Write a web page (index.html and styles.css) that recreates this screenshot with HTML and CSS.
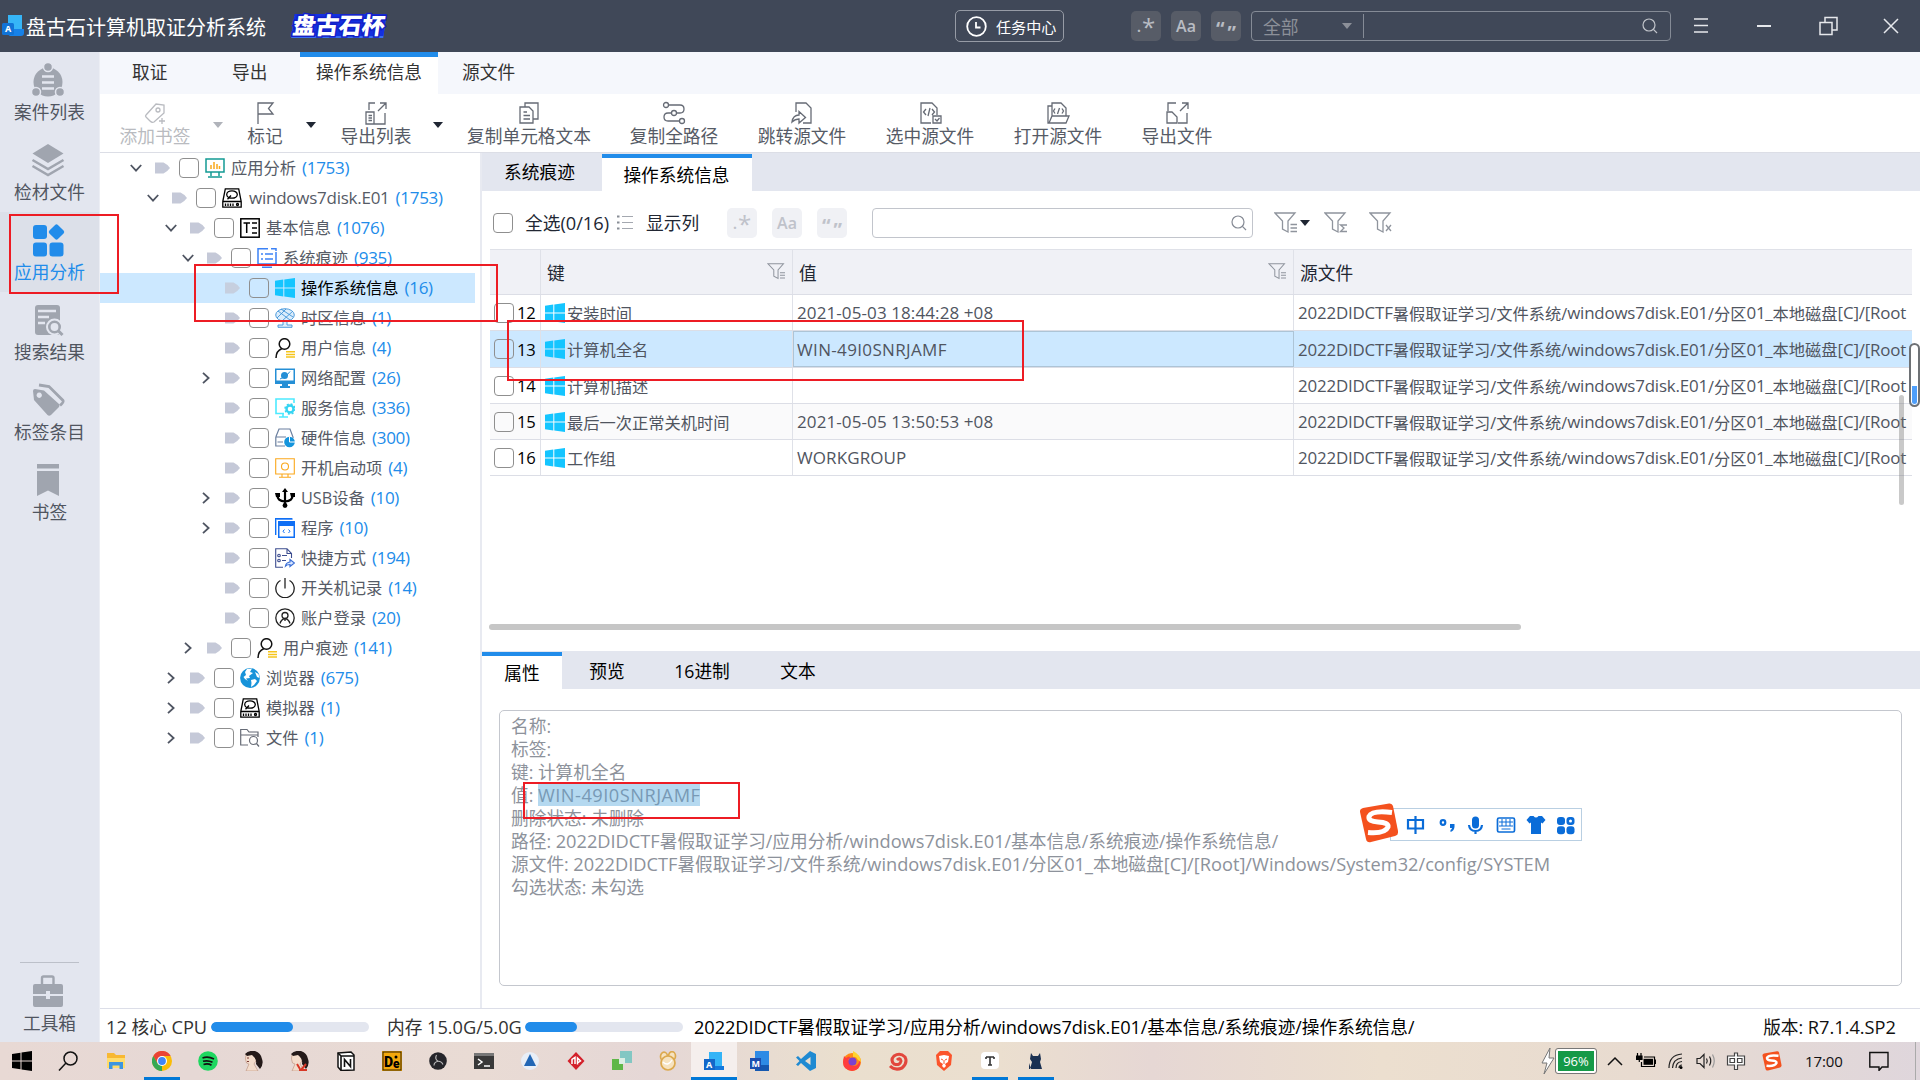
FILE: index.html
```html
<!DOCTYPE html>
<html lang="zh-CN">
<head>
<meta charset="utf-8">
<title>盘古石计算机取证分析系统</title>
<link rel="stylesheet" href="styles.css">
</head>
<body>
<svg class="sprite" width="0" height="0">
  <symbol id="win" viewBox="0 0 20 20"><path fill="#14c5ff" d="M0 2.8 8.3 1.6V9.5H0zM9.3 1.4 20 0V9.5H9.3zM0 10.5H8.3V18.4L0 17.2zM9.3 10.5H20V20L9.3 18.5z"/></symbol>
  <symbol id="tag" viewBox="0 0 15 12"><path fill="#c5c9d8" d="M0 .5H8.500Q12 2 15 6 12 10 8.500 11.500H0z"/></symbol>
  <symbol id="down" viewBox="0 0 12 12"><path d="M.8 3 6 8.600 11.200 3" fill="none" stroke="#4f5562" stroke-width="1.800"/></symbol>
  <symbol id="right" viewBox="0 0 12 12"><path d="M3 .8 8.600 6 3 11.200" fill="none" stroke="#4f5562" stroke-width="1.800"/></symbol>
  <symbol id="search" viewBox="0 0 16 16"><g fill="none" stroke="currentColor" stroke-width="1.200"><circle cx="7" cy="7" r="6"/><path d="M11.400 11.400 15 15"/></g></symbol>
  <symbol id="filter" viewBox="0 0 24 22"><g fill="none" stroke="#8f949d" stroke-width="1.300"><path d="M1 1H21L14 9V20L8.500 17V9z"/><path d="M16.500 12.500H23M16.500 16H23M16.500 19.500H23"/></g></symbol>
  <symbol id="disk" viewBox="0 0 20 20"><g fill="none" stroke="#000" stroke-width="1.300"><path d="M.8 13.500 3.300 .8H16.700L19.200 13.500V19.200H.8z"/><ellipse cx="10" cy="6.500" rx="5.300" ry="3.700"/><path d="M1 13.500H19M9 7.500 5.500 11.300"/><path d="M3.500 15.500V18M6 15.500V18M8.500 15.500V18M11 15.500V18"/><circle cx="15.500" cy="16.500" r="1"/></g></symbol>
  <symbol id="person" viewBox="0 0 20 20"><g fill="none" stroke="#111" stroke-width="1.500"><circle cx="9.500" cy="6" r="5.300"/><path d="M1 20Q1 13 7 10.500"/></g><path d="M11 13.700H20M11 16.400H20M11 19.100H20" stroke="#f5c51c" stroke-width="1.500"/></symbol>
  <symbol id="sogou" viewBox="0 0 40 40"><path fill="#f4511e" d="M4 5 30 .5Q33 0 34 3L39 28Q39.500 32 36 33L12 39Q8 40 7 36L1 9Q.5 6 4 5z"/><path d="M33 9.500Q13 7 10 13.500 9 18.500 19 19 30 19.500 29 24 26 31 9 29.500" fill="none" stroke="#fff" stroke-width="5"/></symbol>
</svg>

<div class="screen">
  <header class="titlebar">
    <svg class="app-icon" viewBox="0 0 22 22"><path fill="#36b5f7" d="M6 0H20V16H6z"/><path fill="#1681e8" d="M6 14H22V18Q22 21 19 21H8Q5 20 6 14z"/><rect y="8" width="12" height="12" rx="1.500" fill="#1173d6"/><text x="3" y="17" font-size="9" fill="#fff" font-family="Noto Sans" font-weight="700">A</text></svg>
    <h1>盘古石计算机取证分析系统</h1>
    <span class="cup">盘古石杯</span>
    <button class="task-center"><svg width="21" height="21" viewBox="0 0 21 21"><g fill="none" stroke="#fff" stroke-width="1.800"><circle cx="10.500" cy="10.500" r="9.300"/><path d="M10 6V11.500H14.500"/></g></svg>任务中心</button>
    <div class="top-opts"><span class="opt regex">.<b>*</b></span><span class="opt">Aa</span><span class="opt q">“<i>”</i></span></div>
    <div class="top-search"><span class="all">全部</span><i class="tri"></i><span class="field"></span><svg width="16" height="16"><use href="#search"/></svg></div>
    <svg class="win-btns" viewBox="0 0 220 24"><g fill="none" stroke="#e6e8ec" stroke-width="1.500"><path d="M2 5H16M2 11.500H16M2 18H16"/><path d="M65 12H79" stroke-width="2"/><path d="M128 8.500H140V20.500H128zM133 8V3.500H145V16H140.500"/><path d="M192 5 206 19M206 5 192 19"/></g></svg>
  </header>

  <div class="body">
    <nav class="side">
      <a class="side-item"><svg viewBox="0 0 34 34"><g fill="#a0a5af"><circle cx="17" cy="19" r="14.500"/><circle cx="17" cy="4" r="4.500" stroke="#e3e6ef" stroke-width="1.500"/><circle cx="5" cy="29" r="4.500" stroke="#e3e6ef" stroke-width="1.500"/><circle cx="29" cy="29" r="4.500" stroke="#e3e6ef" stroke-width="1.500"/></g><path d="M11 13.500H23M11 19.500H23M11 25.500H23" stroke="#e3e6ef" stroke-width="2.600"/></svg><span>案件列表</span></a>
      <a class="side-item"><svg viewBox="0 0 34 34"><path fill="#a0a5af" d="M17 1 32.500 10.500 17 20 1.500 10.500z"/><path d="M1.500 17 17 26 32.500 17M1.500 23 17 32 32.500 23" fill="none" stroke="#a0a5af" stroke-width="2.500"/></svg><span>检材文件</span></a>
      <a class="side-item on"><svg viewBox="0 0 34 34"><g fill="#218cea"><rect x="2" y="2" width="14" height="14" rx="3"/><rect x="2" y="19.500" width="14" height="14" rx="3"/><rect x="18.500" y="19.500" width="14" height="14" rx="3"/><rect x="19.500" y="3" width="12" height="12" rx="2" transform="rotate(45 25.500 9)"/></g></svg><span>应用分析</span></a>
      <a class="side-item"><svg viewBox="0 0 34 34"><rect x="4" y="2" width="25" height="30" rx="3" fill="#a0a5af"/><path d="M7 8H25M7 14H18M7 20H14" stroke="#e3e6ef" stroke-width="2.400"/><circle cx="23.500" cy="24" r="8.500" fill="#e3e6ef"/><circle cx="23.500" cy="24" r="5.200" fill="none" stroke="#a0a5af" stroke-width="2.600"/><path d="M27 27.500 31.500 32" stroke="#a0a5af" stroke-width="3"/></svg><span>搜索结果</span></a>
      <a class="side-item"><svg viewBox="0 0 34 34"><path fill="#a0a5af" fill-rule="evenodd" d="M2 8Q2 6 4 6L13 7.500 28 21Q29 23 28 24L20 32Q18 33.500 16.500 32L3 17zM8.200 9.500a2.700 2.700 0 1 0 .1 0z"/><path d="M8 2 18 3.500 32 17.500Q33 19 29 22.500" fill="none" stroke="#a0a5af" stroke-width="2.800"/></svg><span>标签条目</span></a>
      <a class="side-item"><svg viewBox="0 0 34 34"><path fill="#a0a5af" d="M6 1H28V5.500H6zM6 8H28V33L17 27.500 6 33z"/></svg><span>书签</span></a>
      <a class="side-item toolbox"><svg viewBox="0 0 34 34"><path d="M11 11V4Q11 2.500 12.500 2.500H21Q22.500 2.500 22.500 4V11" fill="none" stroke="#a0a5af" stroke-width="2.400"/><path fill="#a0a5af" d="M4 10H30Q32 10 32 12V20H19V17H15V20H2V12Q2 10 4 10zM2 22H15V25H19V22H32V31Q32 33 30 33H4Q2 33 2 31z"/></svg><span>工具箱</span></a>
    </nav>

    <div class="main">
      <div class="menu"><span class="m m1">取证</span><span class="m m2">导出</span><span class="m m3 on">操作系统信息</span><span class="m m4">源文件</span></div>
      <div class="tools">
        <div class="tool dim"><svg viewBox="0 0 24 24"><path d="M3 14 13 3 21 4V12L11 21Q9 22 7 20L3 16Q2 15 3 14z"/><circle cx="15" cy="9" r="2"/><path d="M19 17V23M16 20H22"/></svg>添加书签</div><i class="tri dimtri"></i>
        <div class="tool"><svg viewBox="0 0 24 24"><path d="M5 23V2H20L15.500 7.500 20 13H5"/></svg>标记</div><i class="tri"></i>
        <div class="tool shift"><svg viewBox="0 0 24 24"><path d="M5 9V2H11M2 11H10V23H2zM14 10 22 2M16 2H22V8M4.500 14.500H8M4.500 17H8M4.500 19.500H8M10 23H21V12"/></svg>导出列表</div><i class="tri"></i>
        <div class="tool"><svg viewBox="0 0 24 24"><path d="M8 6V2H21V18H16M3 6H12L16 10V22H3zM6.500 11H10M6.500 14.500H13M6.500 18H13"/></svg>复制单元格文本</div>
        <div class="tool"><svg viewBox="0 0 24 24"><circle cx="4" cy="4" r="2.500"/><circle cx="12" cy="12" r="2.500"/><circle cx="20" cy="20" r="2.500"/><path d="M6.500 4H18Q22 4 22 8T18 12H14.500M9.500 12H6Q2 12 2 16T6 20H17.500"/></svg>复制全路径</div>
        <div class="tool"><svg viewBox="0 0 24 24"><path d="M6 11V2H16L21 7V22H13M2 21Q3 14 9 14V10.500L15.500 16.500 9 22V18Q5 18 2 21z"/></svg>跳转源文件</div>
        <div class="tool"><svg viewBox="0 0 24 24"><path d="M13 22H3V2H14L19 7V14M8 8 5.500 11 8 14M14 8 16.500 11 14 14M12 7 10 15M15 15H23V22H15zM17 18 19 20 21.500 17"/></svg>选中源文件</div>
        <div class="tool"><svg viewBox="0 0 24 24"><path d="M6 15V2H15L20 7V15M6 5H2V22H20L23 15H6L3 22M9 7.500 7.500 10 9 12.500M16 7.500 17.500 10 16 12.500M13.500 7 11.500 13"/></svg>打开源文件</div>
        <div class="tool"><svg viewBox="0 0 24 24"><path d="M3 10V2H11M15 10 23 2M17 2H23V8M22 12V22H13M2 22V11H7L12 16V22z"/></svg>导出文件</div>
      </div>

      <div class="work">
        <div class="tree">
          <div class="row l0"><svg class="ar"><use href="#down"/></svg><svg class="tg"><use href="#tag"/></svg><i class="cb"></i><svg class="ic" viewBox="0 0 20 20"><path d="M1 1H19V14H1zM6 14V18M14 14V18M3 19H17" fill="none" stroke="#139a94" stroke-width="1.500"/><path d="M6 11V7M9 11V4M12 11V6M14.500 11V8" stroke="#f9a91e" stroke-width="1.500"/></svg><span>应用分析</span><em>(1753)</em></div>
          <div class="row l1"><svg class="ar"><use href="#down"/></svg><svg class="tg"><use href="#tag"/></svg><i class="cb"></i><svg class="ic"><use href="#disk"/></svg><span class="lat">windows7disk.E01</span><em>(1753)</em></div>
          <div class="row l2"><svg class="ar"><use href="#down"/></svg><svg class="tg"><use href="#tag"/></svg><i class="cb"></i><svg class="ic" viewBox="0 0 20 20"><g fill="none" stroke="#000" stroke-width="1.500"><rect x=".8" y=".8" width="18.400" height="18.400"/><path d="M3.500 5H10M6.700 5V15M12 5H17M12 10H17M12 15H17"/></g></svg><span>基本信息</span><em>(1076)</em></div>
          <div class="row l3"><svg class="ar"><use href="#down"/></svg><svg class="tg"><use href="#tag"/></svg><i class="cb"></i><svg class="ic" viewBox="0 0 20 20"><path d="M11 .8H1V16H19V4M14 .8H19V3M5 19.200H15" fill="none" stroke="#3c82f6" stroke-width="1.500"/><path d="M4 6H6M8 6H16M4 11H6M8 11H16" stroke="#3c82f6" stroke-width="1.300"/></svg><span>系统痕迹</span><em>(935)</em></div>
          <div class="row l4 sel"><svg class="ar"></svg><svg class="tg"><use href="#tag"/></svg><i class="cb"></i><svg class="ic"><use href="#win"/></svg><span>操作系统信息</span><em>(16)</em></div>
          <div class="row l4"><svg class="ar"></svg><svg class="tg"><use href="#tag"/></svg><i class="cb"></i><svg class="ic" viewBox="0 0 20 20"><g fill="#dcedfb" stroke="#3f93d8" stroke-width=".9"><ellipse cx="10" cy="7" rx="9.300" ry="6.300"/><path fill="none" d="M3 3 15 12M6 1 18 9M2 10 11 1M7 13 18 3"/><path d="M8 13.500H12V17H17V19.300H3V17H8z"/></g></svg><span>时区信息</span><em>(1)</em></div>
          <div class="row l4"><svg class="ar"></svg><svg class="tg"><use href="#tag"/></svg><i class="cb"></i><svg class="ic"><use href="#person"/></svg><span>用户信息</span><em>(4)</em></div>
          <div class="row l4"><svg class="ar"><use href="#right"/></svg><svg class="tg"><use href="#tag"/></svg><i class="cb"></i><svg class="ic" viewBox="0 0 20 20"><path fill="#258fd6" fill-rule="evenodd" d="M0 .5H20V16H13V18H15V20H5V18H7V16H0zM1.500 2V12.500H18.500V2z"/><circle cx="9.500" cy="7.500" r="3.500" fill="#258fd6"/><path d="M5 11Q12 9 15 3.500" stroke="#258fd6" fill="none"/></svg><span>网络配置</span><em>(26)</em></div>
          <div class="row l4"><svg class="ar"></svg><svg class="tg"><use href="#tag"/></svg><i class="cb"></i><svg class="ic" viewBox="0 0 20 20"><path d="M9 15.500H1V1H19V5M4 19H13M8 16V19" fill="none" stroke="#4deaff" stroke-width="1.600"/><circle cx="15" cy="11" r="3.500" fill="none" stroke="#35d4f2" stroke-width="2.400"/><circle cx="15" cy="11" r="5" fill="none" stroke="#35d4f2" stroke-width="1.500" stroke-dasharray="2 1.930"/></svg><span>服务信息</span><em>(336)</em></div>
          <div class="row l4"><svg class="ar"></svg><svg class="tg"><use href="#tag"/></svg><i class="cb"></i><svg class="ic" viewBox="0 0 20 20"><path d="M.8 9 4 1H15L18 9V10M.8 9H11M.8 9V18H10M2.500 14H8" fill="none" stroke="#6a7f9f" stroke-width="1.200"/><circle cx="14.500" cy="14" r="5.300" fill="#1494dc"/><path d="M14.500 8.500V14H20" stroke="#fff" fill="none"/></svg><span>硬件信息</span><em>(300)</em></div>
          <div class="row l4"><svg class="ar"></svg><svg class="tg"><use href="#tag"/></svg><i class="cb"></i><svg class="ic" viewBox="0 0 20 20"><g fill="none" stroke="#fba81c" stroke-width="1.100"><path d="M.7 .7H19.300V16H.7zM7 16V19M13 16V19M4 19.300H16"/><circle cx="10" cy="8.500" r="3.500"/></g></svg><span>开机启动项</span><em>(4)</em></div>
          <div class="row l4"><svg class="ar"><use href="#right"/></svg><svg class="tg"><use href="#tag"/></svg><i class="cb"></i><svg class="ic" viewBox="0 0 20 20"><path d="M10 3V18M2.500 7Q2 13 10 13.500 18 13 17.500 7" fill="none" stroke="#000" stroke-width="2.200"/><circle cx="10" cy="17.500" r="2.400"/><path d="M10 0 13 4H7zM0 5H5V9H1zM15 5H20V9H16z"/></svg><span>USB设备</span><em>(10)</em></div>
          <div class="row l4"><svg class="ar"><use href="#right"/></svg><svg class="tg"><use href="#tag"/></svg><i class="cb"></i><svg class="ic" viewBox="0 0 20 20"><path fill="#9cc3fb" d="M2 0H18V2H2z"/><path d="M.7 17V.7H17" fill="none" stroke="#0f6ff5" stroke-width="1.400"/><path fill="#0f6ff5" fill-rule="evenodd" d="M3 3H20V20H3zM4.500 8V18.500H18.500V8z"/><path d="M9.500 11.500 8 13.200 9.500 15M13.500 11.500 15 13.200 13.500 15" fill="none" stroke="#0f6ff5"/></svg><span>程序</span><em>(10)</em></div>
          <div class="row l4"><svg class="ar"></svg><svg class="tg"><use href="#tag"/></svg><i class="cb"></i><svg class="ic" viewBox="0 0 20 20"><g fill="none" stroke="#3c4d8f" stroke-width="1.100"><path d="M8 19.300H.7V.7H12L16.500 5.500V10M12 .7V5.500H16.500"/><circle cx="4" cy="7.500" r="1.300"/><circle cx="4" cy="12.500" r="1.300"/><path d="M7 7.500H12M7 12.500H11"/></g><path d="M10.500 18Q11 14.500 15 14V11.500L19.500 15 15 18.500V16.500Q12 16.500 10.500 18z" fill="#dbe7ff" stroke="#3b6fd6" stroke-width="1.200"/></svg><span>快捷方式</span><em>(194)</em></div>
          <div class="row l4"><svg class="ar"></svg><svg class="tg"><use href="#tag"/></svg><i class="cb"></i><svg class="ic" viewBox="0 0 20 20"><path d="M5.500 2.500A9.200 9.200 0 1 0 14.500 2.500M10 0V10.500" fill="none" stroke="#222" stroke-width="1.300"/></svg><span>开关机记录</span><em>(14)</em></div>
          <div class="row l4"><svg class="ar"></svg><svg class="tg"><use href="#tag"/></svg><i class="cb"></i><svg class="ic" viewBox="0 0 20 20"><g fill="none" stroke="#222" stroke-width="1.300"><circle cx="10" cy="10" r="9.200"/><circle cx="10" cy="7.500" r="3"/><path d="M5 15.500Q6 11.500 10 10.500 14 11.500 15 15.500M10 10.500V13"/></g></svg><span>账户登录</span><em>(20)</em></div>
          <div class="row l3"><svg class="ar"><use href="#right"/></svg><svg class="tg"><use href="#tag"/></svg><i class="cb"></i><svg class="ic"><use href="#person"/></svg><span>用户痕迹</span><em>(141)</em></div>
          <div class="row l2"><svg class="ar"><use href="#right"/></svg><svg class="tg"><use href="#tag"/></svg><i class="cb"></i><svg class="ic" viewBox="0 0 20 20"><circle cx="10" cy="10" r="9.900" fill="#1793d9"/><path fill="#fff" d="M7 1 12 .5 10 4 13 5 9 8 10 10 6 10.500 8 13 5 11 2 7 3.500 9 6 7 5 4zM11 12 15 11 17 13 14 17 11 19 11.500 15zM15 4 18.500 6 19.500 10 17 9z"/></svg><span>浏览器</span><em>(675)</em></div>
          <div class="row l2"><svg class="ar"><use href="#right"/></svg><svg class="tg"><use href="#tag"/></svg><i class="cb"></i><svg class="ic"><use href="#disk"/></svg><span>模拟器</span><em>(1)</em></div>
          <div class="row l2"><svg class="ar"><use href="#right"/></svg><svg class="tg"><use href="#tag"/></svg><i class="cb"></i><svg class="ic" viewBox="0 0 20 20"><g fill="none" stroke="#666b76" stroke-width="1.200"><path d="M8 17H.7V1.500H7L9 4H18V9M.7 7H18"/><circle cx="13.500" cy="12.500" r="4"/><path d="M16.500 15.500 19 18.500"/></g></svg><span>文件</span><em>(1)</em></div>
        </div>

        <div class="right">
          <div class="tabs"><span class="t a">系统痕迹</span><span class="t b on">操作系统信息</span></div>
          <div class="filterbar">
            <i class="cb"></i><span class="selall">全选<span class="lat">(0/16)</span></span>
            <svg class="lst" viewBox="0 0 16 16"><path d="M0 1.500H2.500M0 7.500H2.500M0 13.500H2.500" stroke="#888d96" stroke-width="2"/><path d="M5 1.500H16M5 7.500H16M5 13.500H16" stroke="#a4a8b0" stroke-width="1.200"/></svg>
            <span class="showcol">显示列</span>
            <div class="opts"><span class="opt regex">.<b>*</b></span><span class="opt">Aa</span><span class="opt q">“<i>”</i></span></div>
            <div class="search"><svg width="16" height="16"><use href="#search"/></svg></div>
            <svg class="f1"><use href="#filter"/></svg><i class="tri"></i>
            <svg class="f2" viewBox="0 0 24 22"><g fill="none" stroke="#8f949d" stroke-width="1.300"><path d="M1 1H21L14 9V20L8.500 17V9z"/><path d="M23 13H16.500L20 16 16.500 19.500H23"/></g></svg>
            <svg class="f3" viewBox="0 0 24 22"><g fill="none" stroke="#8f949d" stroke-width="1.300"><path d="M1 1H21L14 9V20L8.500 17V9z"/><path d="M17 13 22 19M22 13 17 19"/></g></svg>
          </div>
          <div class="grid">
            <div class="gr head"><span></span><span>键<svg><use href="#filter"/></svg></span><span>值<svg><use href="#filter"/></svg></span><span>源文件</span></div>
            <div class="gr"><span><i class="cb"></i>12</span><span><svg><use href="#win"/></svg>安装时间</span><span class="v">2021-05-03 18:44:28 +08</span><span class="p"><b>2022DIDCTF</b>暑假取证学习/文件系统/<b>windows7disk.E01</b>/分区<b>01_</b>本地磁盘<b>[C]/[Root</b></span></div>
            <div class="gr hl"><span><i class="cb"></i>13</span><span><svg><use href="#win"/></svg>计算机全名</span><span class="v cur">WIN-49I0SNRJAMF</span><span class="p"><b>2022DIDCTF</b>暑假取证学习/文件系统/<b>windows7disk.E01</b>/分区<b>01_</b>本地磁盘<b>[C]/[Root</b></span></div>
            <div class="gr"><span><i class="cb"></i>14</span><span><svg><use href="#win"/></svg>计算机描述</span><span></span><span class="p"><b>2022DIDCTF</b>暑假取证学习/文件系统/<b>windows7disk.E01</b>/分区<b>01_</b>本地磁盘<b>[C]/[Root</b></span></div>
            <div class="gr alt"><span><i class="cb"></i>15</span><span><svg><use href="#win"/></svg>最后一次正常关机时间</span><span class="v">2021-05-05 13:50:53 +08</span><span class="p"><b>2022DIDCTF</b>暑假取证学习/文件系统/<b>windows7disk.E01</b>/分区<b>01_</b>本地磁盘<b>[C]/[Root</b></span></div>
            <div class="gr"><span><i class="cb"></i>16</span><span><svg><use href="#win"/></svg>工作组</span><span class="v">WORKGROUP</span><span class="p"><b>2022DIDCTF</b>暑假取证学习/文件系统/<b>windows7disk.E01</b>/分区<b>01_</b>本地磁盘<b>[C]/[Root</b></span></div>
          </div>
          <div class="hscroll"></div>
          <div class="tabs low"><span class="t p1 on">属性</span><span class="t p2">预览</span><span class="t p3">16进制</span><span class="t p4">文本</span></div>
          <div class="props">
            <p>名称:</p><p>标签:</p><p>键: 计算机全名</p><p>值: <mark>WIN-49I0SNRJAMF</mark></p><p>删除状态: 未删除</p>
            <p>路径: <b>2022DIDCTF</b>暑假取证学习/应用分析/<b>windows7disk.E01</b>/基本信息/系统痕迹/操作系统信息/</p>
            <p>源文件: <b>2022DIDCTF</b>暑假取证学习/文件系统/<b>windows7disk.E01</b>/分区<b>01_</b>本地磁盘<b>[C]/[Root]/Windows/System32/config/SYSTEM</b></p>
            <p>勾选状态: 未勾选</p>
          </div>
        </div>
      </div>
      <footer class="status"><span class="s1"><b>12</b> 核心 <b>CPU</b></span><i class="bar"><i style="width:52%"></i></i><span class="s2">内存 <b>15.0G/5.0G</b></span><i class="bar"><i style="width:33%"></i></i><span class="s3"><b>2022DIDCTF</b>暑假取证学习/应用分析/<b>windows7disk.E01</b>/基本信息/系统痕迹/操作系统信息/</span><span class="s4">版本: <b>R7.1.4.SP2</b></span></footer>
    </div>
  </div>

  <div class="taskbar">
    <span class="k"><svg viewBox="0 0 20 20"><path d="M0 3 8.500 1.700V9.500H0zM9.500 1.500 20 0V9.500H9.500zM0 10.500H8.500V18.300L0 17zM9.500 10.500H20V20L9.500 18.500z"/></svg></span>
    <span class="k"><svg viewBox="0 0 20 20"><g fill="none" stroke="#111" stroke-width="1.500"><circle cx="12.500" cy="7.500" r="6.500"/><path d="M8 12 1 19.500"/></g></svg></span>
    <span class="k"><svg viewBox="0 0 20 20"><path fill="#f8b832" d="M1 2H8L10 4H19V17H1z"/><path fill="#ffdc6b" d="M1 7H19V17H1z"/><path fill="#3d95e0" d="M3 11H17V18H13.500V14.500H6.500V18H3z"/></svg></span>
    <span class="k run"><svg viewBox="0 0 20 20"><circle cx="10" cy="10" r="10" fill="#fbbc05"/><path fill="#ea4335" d="M1.300 5A10 10 0 0 1 18.700 5H10L5.700 12.500z"/><path fill="#34a853" d="M1.300 5 5.700 12.500 10 15 10 20A10 10 0 0 1 1.300 5z"/><circle cx="10" cy="10" r="5" fill="#fff"/><circle cx="10" cy="10" r="3.900" fill="#4285f4"/></svg></span>
    <span class="k"><svg viewBox="0 0 20 20"><circle cx="10" cy="10" r="9.800" fill="#1ed760"/><path d="M4.500 7Q10 5 16 8M5 10.300Q10 9 14.500 11.300M5.500 13.500Q10 12 13.500 14.200" fill="none" stroke="#111" stroke-width="1.700"/></svg></span>
    <span class="k"><svg viewBox="0 0 20 20"><path fill="#f3dccb" stroke="#b98f7a" stroke-width=".6" d="M2 3 10 1 13 8 10 13 14 20H2L5 13 2.500 12 1.500 8z"/><path fill="#241a19" d="M1 3Q5-1 11 0 17 2 18 8 20 13 16 18L12 13Q13 8 8 4L3 5z"/><path d="M3 7H5M3 10.500H5" stroke="#7a3a34"/></svg></span>
    <span class="k"><svg viewBox="0 0 20 20"><path fill="#f3dccb" stroke="#b98f7a" stroke-width=".6" d="M2 3 10 1 13 8 10 13 14 20H2L5 13 2.500 12 1.500 8z"/><path fill="#241a19" d="M1 3Q5-1 11 0 17 2 18 8 20 13 16 18L12 13Q13 8 8 4L3 5z"/><path d="M7 13 10 18M11 19 16 13M9 19H17" stroke="#d73826" stroke-width="2"/></svg></span>
    <span class="k"><svg viewBox="0 0 20 20"><path d="M2 2 15 1 18 4V19L5 19.500 2 16z" fill="#fff" stroke="#111" stroke-width="1.500"/><path d="M2 2 5 5H18M5 5V19M8.500 16V8.500L14.500 15.500V8" fill="none" stroke="#111" stroke-width="1.600"/></svg></span>
    <span class="k"><svg viewBox="0 0 20 20"><rect width="20" height="20" fill="#f3a80c"/><rect x="1" y="1" width="18" height="18" fill="none" stroke="#332200"/><text x="2" y="16" font-size="14" font-weight="900" font-family="Roboto">D</text><text x="11" y="17" font-size="12" font-weight="900" font-family="Roboto">e</text><circle cx="14" cy="6" r="1.500"/></svg></span>
    <span class="k"><svg viewBox="0 0 20 20"><circle cx="10" cy="10" r="8.800" fill="#26262b"/><g fill="none" stroke="#bbb" stroke-width="1.100"><path d="M8.500 4Q6.500 8 10 10.200 13.500 10 15 13.500M10 10.200Q6 11 6 14.500"/></g></svg></span>
    <span class="k"><svg viewBox="0 0 20 20"><rect y="2" width="20" height="16" fill="#393939"/><path fill="#777" d="M0 2H20V5H0z"/><path d="M4 8 8 11 4 14M10 15H16" fill="none" stroke="#fff" stroke-width="1.500"/></svg></span>
    <span class="k"><svg viewBox="0 0 20 20"><circle cx="10" cy="10" r="9" fill="#e8eef7"/><path d="M10 3 16 15H4z" fill="#2166b5"/></svg></span>
    <span class="k"><svg viewBox="0 0 20 20"><path d="M10 1 18.500 10 10 19 1.500 10z" fill="#d3202a"/><path d="M6 13V8.500L9 6.500V13M11.500 13.500V7L14.500 10 11.500 12" fill="none" stroke="#fff" stroke-width="1.500"/></svg></span>
    <span class="k"><svg viewBox="0 0 20 20"><path fill="#83c7c3" d="M8 0H20V12H8z"/><path fill="#5fb748" d="M0 8H11V19H0z"/><path fill="#dceee4" d="M7 7H13V13H7z"/></svg></span>
    <span class="k"><svg viewBox="0 0 20 20"><g fill="#f6e3c0" stroke="#dca94e" stroke-width="1.700"><ellipse cx="6" cy="5.500" rx="3.500" ry="4.300"/><ellipse cx="14" cy="5" rx="3.500" ry="4.300"/><circle cx="10" cy="12" r="7"/></g><path d="M5 11Q10 16 14 9" fill="none" stroke="#fff" stroke-width="1.500"/></svg></span>
    <span class="k cur"><svg viewBox="0 0 20 20"><path fill="#33b4f7" d="M5 1H18V16H5z"/><path fill="#1479dd" d="M6 15H20V19H6z"/><rect y="8" width="11" height="11" fill="#1267c9"/><text x="2" y="17" font-size="9" fill="#fff" font-family="Noto Sans" font-weight="700">A</text></svg></span>
    <span class="k"><svg viewBox="0 0 20 20"><path fill="#2e8be5" d="M5 0H19V18H5z"/><path fill="#1558b0" d="M5 14H19V20H5z"/><rect y="7" width="11" height="11" fill="#1b4fb0"/><text x="1.500" y="16" font-size="9" fill="#fff" font-family="Noto Sans" font-weight="700">M</text></svg></span>
    <span class="k"><svg viewBox="0 0 20 20"><path fill="#1f8ad2" d="M14 0 20 3V17L14 20 5 12 2 15 0 13.500 3.500 10 0 6.500 2 5 5 8zM14.500 6 9 10 14.500 14z"/></svg></span>
    <span class="k"><svg viewBox="0 0 20 20"><circle cx="10" cy="11" r="9" fill="#ff8a16"/><path fill="#ff3d3d" d="M2 5 4 7Q8 4 8 7L6 9 10 10Q6 14 12 15 17 15 18 7 20 19 10 20 1 19 1 11z"/><circle cx="10.500" cy="10.500" r="4" fill="#7b42cf"/><path fill="#ffd330" d="M11 0Q19 4 19 11L16 9Q14 5 11 6z"/></svg></span>
    <span class="k"><svg viewBox="0 0 20 20"><path d="M2 15Q7 20 14 17 20 12 17 6 12 1 6 5 2 9 6 13 12 15 13 10 12 6 9 9" fill="none" stroke="#e2473d" stroke-width="3"/></svg></span>
    <span class="k"><svg viewBox="0 0 20 20"><path fill="#fb542b" d="M6 0H14L18 4 17 14 10 20 3 14 2 4z"/><path fill="#fff" d="M5 5 10 4 15 5 14 11 11 13 12 15 10 17 8 15 9 13 6 11z"/><path d="M7 8 9 9M13 8 11 9M10 9V13" stroke="#fb542b"/></svg></span>
    <span class="k run"><svg viewBox="0 0 20 20"><rect x="1" y="1" width="18" height="17" rx="4" fill="#fff"/><path d="M6 6H14M10 6V14M8 14H12M6 6V8M14 6V8" stroke="#333" stroke-width="1.600"/></svg></span>
    <span class="k run"><svg viewBox="0 0 20 20"><path fill="#1b3152" d="M5 2 7 5H12L14 2 15 8 14 11 16 18H4L6 11 4 8zM3 12V18H5z"/></svg></span>
    <div class="tray">
      <svg class="bolt" viewBox="0 0 16 30"><path d="M10 2 2 17H7L4 28 14 12H9z" fill="#fff" stroke="#777"/></svg>
      <span class="batt">96%</span>
      <svg class="ty" viewBox="0 0 20 20"><path d="M3 14 10 7 17 14" fill="none" stroke="#111" stroke-width="1.500"/></svg>
      <svg class="ty" viewBox="0 0 20 20"><path d="M5.500 11V15.500H18.500V6H8" fill="none" stroke="#000" stroke-width="1.200"/><path d="M7.500 7.800H17V13.800H7.500z"/><path d="M19.500 8.500V13M1.500 2V5M5 2V5M.5 5H6V8.500H.5zM3.300 8V11" stroke="#000" stroke-width="1.200"/></svg>
      <svg class="ty" viewBox="0 0 20 20"><g fill="none" stroke="#222" stroke-width="1.200"><path d="M3 17Q3 4 16 3M6.500 17Q7 8 16 7M10 17Q10 11 16 10.500M13 17Q13 14 16 14"/></g><circle cx="15" cy="16.500" r="1.500"/></svg>
      <svg class="ty" viewBox="0 0 20 20"><g fill="none" stroke="#222" stroke-width="1.200"><path d="M1 7.500H4L8 3.500V16.500L4 12.500H1zM10.500 7.500Q12 10 10.500 12.500M13.500 5.500Q16 10 13.500 14.500"/><path d="M16.500 3.500Q20 10 16.500 16.500" stroke="#999"/></g></svg>
      <svg class="ty" viewBox="0 0 20 20"><g fill="#fff" stroke="#444" stroke-width="1.200"><path d="M1.500 5H8.500V2H11.500V5H18.500V14H11.500V18.500H8.500V14H1.500z"/><path d="M4 7.500H8.500V11.500H4zM11.500 7.500H16V11.500H11.500z"/></g></svg>
      <svg class="ty so" viewBox="0 0 40 40"><use href="#sogou" width="40" height="40"/></svg>
      <time>17:00</time>
      <svg class="ty" viewBox="0 0 20 20"><path d="M.8 1.500H19V16H13L10 19.500V16H.8z" fill="none" stroke="#111" stroke-width="1.400"/></svg>
      <i class="edge"></i>
    </div>
  </div>

  <div class="vscroll"></div>
  <div class="pill"></div>
  <div class="ime">
    <svg viewBox="0 0 190 32" width="190" height="32"><g fill="none" stroke="#0a6cd8" stroke-width="2.200"><path d="M17 11H32V19.500H17zM24.500 7V25"/><circle cx="52" cy="13.500" r="2.300"/><path d="M78 16Q78.500 22 84.500 22 90.500 22 91 16M84.500 22V25"/><rect x="106.500" y="9" width="17" height="14" rx="1.500" stroke-width="1.700"/><path d="M108 13H122M108 17H122M110.500 20H119.500M111 10V17M115 10V17M119 10V17" stroke-width="1"/></g><g fill="#0a6cd8"><path d="M59 15H63.500V18Q63 22 59.500 23V21Q61 20 61 19H59z"/><rect x="81" y="7.500" width="7" height="12" rx="3.500"/><path d="M139 7H142.500Q145 10 147.500 7H151L154.500 11 151.500 14.500 150 13.500V25H140V13.500L138.500 14.500 135.500 11z"/><rect x="166" y="8" width="8" height="8" rx="3"/><rect x="175.500" y="8" width="8" height="8" rx="3"/><rect x="166" y="17.300" width="8" height="8" rx="3"/><rect x="175.500" y="17.300" width="8" height="8" rx="3"/><circle cx="179.500" cy="12" r="1.500" fill="#fff"/></g></svg>
  </div>
  <svg class="ime-logo"><use href="#sogou"/></svg>
  <div class="mark k1"></div><div class="mark k2"></div><div class="mark k3"></div><div class="mark k4"></div>
</div>
</body>
</html>
```
FILE: styles.css
```css
* { box-sizing: border-box; }
body { margin: 0; font-family: "Open Sans", "Noto Sans CJK SC", sans-serif; font-size: 17.7px; color: #50555f; }
b, em, i { font-weight: inherit; font-style: normal; }
svg { display: block; flex: none; }
.sprite { position: absolute; }
.screen { position: relative; width: 1920px; height: 1080px; overflow: hidden; display: flex; flex-direction: column; background: #fff; white-space: nowrap; }
b, .lat, mark { font-size: 1.030em; letter-spacing: 0; }

.titlebar { height: 52px; flex: none; background: #404858; display: flex; align-items: center; color: #fff; }
.app-icon { width: 22px; height: 22px; margin-left: 2px; }
h1 { margin: 0 0 0 2px; font-size: 20px; font-weight: 400; width: 267px; }
.cup { width: 92px; height: 22px; font-size: 23px; line-height: 22px; font-weight: 900; color: #fff; -webkit-text-stroke: 3px #1420c8; paint-order: stroke fill; transform: translateY(-1px) skewX(-8deg); background: #1430e0; box-shadow: 0 2px #3a6cf0; }
.task-center { margin-left: 570px; width: 109px; height: 32px; border: 1px solid #969ba5; border-radius: 5px; background: none; color: #fff; font: 15.100px "Open Sans", "Noto Sans CJK SC", sans-serif; display: flex; align-items: center; gap: 9px; padding: 0 0 0 10px; }
.top-opts { margin-left: 67px; display: flex; gap: 10px; }
.opt { width: 30px; height: 30px; border-radius: 5px; background: #575c67; color: #b9bcc3; display: flex; align-items: center; justify-content: center; font-size: 16px; font-weight: 600; line-height: 30px; }
.regex { gap: 1px; }
.opt b { font-size: 24px; padding-top: 2px; font-weight: 400; }
.q { font-family: "Noto Sans", sans-serif; font-weight: 700; font-size: 19px; gap: 3px; padding-top: 6px; }
.q i { padding-top: 7px; }
.top-search { margin-left: 10px; width: 420px; height: 30px; border: 1px solid #858b96; border-radius: 4px; display: flex; align-items: center; color: #8c9099; }
.all { margin-left: 11px; width: 79px; font-size: 17.800px; }
.tri { width: 0; height: 0; flex: none; border: 5.500px solid transparent; border-top: 6.500px solid #1f2633; border-bottom: 0; }
.top-search .tri { border-top-color: #8c9099; }
.field { border-left: 1px solid #858b96; height: 24px; margin-left: 11px; width: 279px; }
.top-search svg { color: #c1c4ca; }
.win-btns { width: 220px; height: 24px; margin-left: 21px; }

.body { height: 990px; display: flex; }
.side { width: 100px; background: #e3e6ef; border-right: 1px solid #eceef4; display: flex; flex-direction: column; }
.side-item { height: 80px; display: flex; flex-direction: column; align-items: center; padding-top: 11px; }
.side-item svg { width: 34px; height: 34px; margin-right: 3px; }
.side-item span { line-height: 24px; margin-top: 3px; }
.side-item.on { background: #dce0e9; color: #218cea; }
.toolbox { margin: auto 20px 0; height: 80px; border-top: 1px solid #bcc0c9; }
.main { flex: 1; min-width: 0; display: flex; flex-direction: column; }
.menu { height: 42px; background: #f5f7fc; display: flex; color: #333; }
.m { line-height: 40px; padding-left: 32px; }
.m1, .m2 { width: 100px; }
.m3 { width: 138px; padding-left: 0; text-align: center; }
.m4 { padding-left: 24px; }
.m.on { background: #fff; border-top: 5px solid #218cea; line-height: 31px; }
.tools { height: 59px; border-bottom: 1px solid #dcdee6; display: grid; grid-template-columns: 110px 16px 78px 14px 112px 16px 166px 124px 132px 124px 132px 106px; justify-items: center; }
.tool { padding-top: 7px; display: flex; flex-direction: column; align-items: center; line-height: 23px; color: #565b66; }
.tool svg { width: 24px; height: 24px; fill: none; stroke: #666b75; stroke-width: 1.300; }
.tool.shift { padding-left: 4px; }
.tool.dim { color: #b9bbc0; }
.tool.dim svg { stroke: #b9bbc0; }
.tools .tri { margin-top: 28px; }
.tools .dimtri { border-top-color: #b0b3ba; }

.work { height: 855px; display: flex; }
.tree { width: 382px; border-right: 2px solid #e8eaf1; }
.row { height: 30px; display: flex; align-items: center; font-size: 16.250px; color: #565b66; }
.row.sel { width: 375px; background: #cce8ff; color: #000; }
.l0 { padding-left: 30px; } .l1 { padding-left: 47px; } .l2 { padding-left: 65px; } .l3 { padding-left: 82px; } .l4 { padding-left: 100px; }
.ar { width: 12px; height: 12px; }
.tg { width: 15px; height: 12px; margin-left: 13px; }
.sel .tg { opacity: .8; }
.cb { width: 20px; height: 20px; flex: none; border: 1px solid #8f8f8f; border-radius: 4px; }
.row .cb { margin-left: 9px; }
.ic { width: 20px; height: 20px; margin-left: 6px; }
.row span { margin-left: 6px; line-height: 28px; padding-bottom: 1px; }
.row .lat { font-size: 17px; letter-spacing: -.25px; margin-left: 7px; }
.row em { margin-left: 6px; color: #218cea; font-size: 17px; letter-spacing: -.3px; padding-bottom: 1px; }

.right { flex: 1; min-width: 0; display: flex; flex-direction: column; }
.tabs { height: 38px; flex: none; background: #e3e6ef; display: flex; color: #000; text-align: center; }
.t { line-height: 40px; }
.t.on { background: #fff; border-top: 4px solid #218cea; margin-top: 1px; line-height: 35px; }
.a { width: 120px; padding-right: 5px; line-height: 39px; } .b { width: 150px; padding-right: 1px; }
.tabs .b.on { line-height: 34px; }
.filterbar { height: 58px; display: flex; align-items: center; padding: 6px 0 0 11px; color: #222733; }
.selall { margin-left: 12px; width: 92px; }
.lst { width: 16px; height: 16px; }
.showcol { margin-left: 13px; width: 81px; }
.selall, .showcol { padding-bottom: 2px; }
.opts { display: flex; gap: 15px; }
.opts .opt { background: #f0f1f5; color: #bfc2ca; }
.search { margin-left: 25px; width: 381px; height: 30px; border: 1px solid #c2c5cc; border-radius: 4px; display: flex; align-items: center; justify-content: flex-end; padding-right: 5px; color: #858a94; }
.f1, .f2, .f3 { width: 24px; height: 22px; }
.f1 { margin-left: 21px; margin-right: 2px; } .f2 { margin-left: 14px; } .f3 { margin-left: 21px; }
.grid { margin-left: 8px; width: 1422px; border-top: 1px solid #dfe1e8; }
.gr { display: grid; grid-template-columns: 51px 252px 501px 618px; height: 36px; border-bottom: 1px solid #dcdee6; font-size: 16.250px; }
.gr > span { border-right: 1px solid #dfe1e8; display: flex; align-items: center; overflow: hidden; white-space: pre; padding-left: 4px; }
.gr > span:last-child { border-right: 0; }
.gr > span:first-child { color: #000; gap: 3px; font-size: 16.600px; letter-spacing: -.3px; }
.gr svg { width: 20px; height: 20px; margin-right: 2px; }
.gr.head { height: 45px; background: #f0f1f6; font-size: 17.700px; color: #222733; }
.head > span { justify-content: space-between; padding-left: 6px; padding-bottom: 1px; }
.head svg { width: 19px; height: 17px; margin-right: 6px; }
.gr b { font-size: 16.900px; letter-spacing: -.18px; }
.gr > .v { padding-left: 4px; font-size: 17px; letter-spacing: .1px; }
.gr > .p { padding-left: 4px; }
.hl { background: #cce8ff; }
.gr.hl { height: 37px; }
.gr > .cur { border: 1px solid #adc4d6; padding-left: 3px; letter-spacing: .35px; }
.alt { background: #fafafb; }
.hscroll { margin: 148px 0 0 7px; width: 1032px; height: 6px; flex: none; border-radius: 3px; background: #c6c6c6; }
.low { margin-top: 21px; }
.p1 { width: 80px; } .p2 { width: 90px; } .p3 { width: 100px; } .p4 { width: 92px; }
.props { margin: 21px 18px 0 17px; height: 276px; flex: none; border: 1px solid #c4c7ce; border-radius: 5px; padding: 4px 11px; color: #8d929b; }
.props p { margin: 0; height: 23px; line-height: 23px; }
mark { background: #b5d9f0; color: #7899b5; display: inline-block; line-height: 22px; letter-spacing: .5px; }

.status { height: 34px; border-top: 1px solid #dcdee8; display: flex; align-items: center; color: #333; padding: 0 24px 0 6px; }
.s1 { width: 105px; } .s2 { width: 138px; margin-left: 18px; }
.bar { width: 158px; height: 10px; margin-top: 2px; border-radius: 5px; background: #e3e6ef; overflow: hidden; }
.bar i { display: block; height: 10px; border-radius: 5px; background: #218cea; }
.s3 { margin-left: 11px; color: #000; } .s4 { margin-left: auto; color: #111; }
.s3 b { letter-spacing: -.08px; }

.taskbar { height: 38px; padding-left: 1px; display: flex; background: linear-gradient(90deg, #e8d9d4, #e6d8d5 10%, #e9dbd4 25%, #e5d7d6 34%, #eadfce 44%, #ebdfcf 52%, #e6d7d4 60%, #ecdfcf 72%, #e8dbd0 85%, #dfd6dc); }
.k { width: 46px; flex: none; display: flex; align-items: center; justify-content: center; }
.k svg { width: 20px; height: 20px; }
.k:first-child svg, .k:nth-child(2) svg { margin-right: 4px; }
.k.run { box-shadow: inset 0 -3px #0078d7; clip-path: inset(0 5px); }
.k.cur { background: #f5efed; box-shadow: inset 0 -3px #0078d7; }
.tray { margin-left: auto; display: flex; align-items: center; color: #111; }
.bolt { width: 16px; height: 30px; }
.batt { width: 40px; height: 24px; background: #159947; border: 2px solid #fff; outline: 1px solid #777; border-radius: 2px; color: #fff; font-size: 13px; line-height: 20px; text-align: center; margin-right: 2px; }
.ty { width: 20px; height: 20px; margin-left: 10px; }
.bolt + .batt + .ty { margin-left: 7px; margin-right: 1px; }
.so { margin-left: 16px; }
.tray time { width: 42px; margin-left: 23px; margin-right: 12px; font-size: 15px; letter-spacing: -.1px; }
.edge { width: 1px; height: 38px; background: #aaa; margin: 0 4px 0 26px; }

.vscroll { position: absolute; left: 1899px; top: 395px; width: 5px; height: 110px; border-radius: 3px; background: rgba(120,120,120,.4); }
.pill { position: absolute; left: 1909px; top: 343px; width: 11px; height: 64px; border: 2px solid #6e7175; border-radius: 6px; background: linear-gradient(#fff 0 68%, #4e9ffb 68%); box-shadow: inset 0 0 0 1px #fff; }
.ime { position: absolute; left: 1390px; top: 808px; width: 192px; height: 33px; border: 1px solid #b9cfe2; background: #fff; }
.ime-logo { position: absolute; left: 1359px; top: 803px; width: 40px; height: 40px; }
.mark { position: absolute; border: 2px solid #ed1c24; }
.k1 { left: 9px; top: 214px; width: 110px; height: 80px; }
.k2 { left: 194px; top: 264px; width: 304px; height: 58px; }
.k3 { left: 507px; top: 320px; width: 517px; height: 61px; }
.k4 { left: 523px; top: 782px; width: 217px; height: 37px; }
```
